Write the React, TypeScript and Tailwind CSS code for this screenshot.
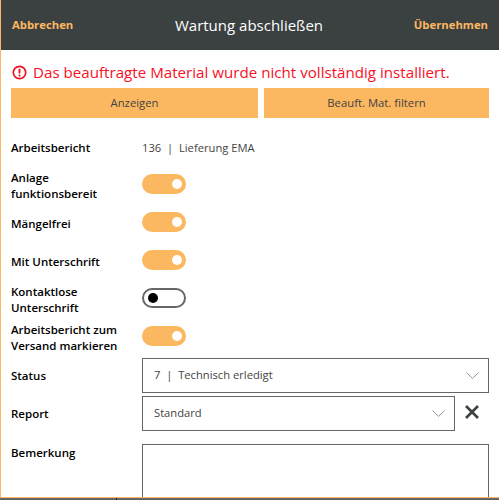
function Toggle({ on = true }: { on?: boolean }) {
  if (!on) {
    return (
      <div className="flex h-[20px] w-[44px] items-center rounded-full border-2 border-[#666666] bg-white pl-[4px]">
        <div className="h-[10px] w-[10px] rounded-full bg-black" />
      </div>
    )
  }
  return (
    <div className="flex h-[20px] w-[44px] items-center justify-end rounded-full bg-[#fbb860] pr-[4px]">
      <div className="h-[10px] w-[10px] rounded-full bg-white" />
    </div>
  )
}

function ToggleRow({ label, on = true }: { label: string; on?: boolean }) {
  return (
    <div className="flex h-[38px] items-center">
      <div className="mt-[1px] w-[131px] whitespace-pre-line text-[11.5px] leading-[16px] font-semibold text-black">{label}</div>
      <div className="mb-[2px]">
        <Toggle on={on} />
      </div>
    </div>
  )
}

function Select({ value, className }: { value: string; className: string }) {
  return (
    <div className={`flex h-[35px] items-center justify-between border border-[#666666] bg-white pl-[11px] pr-[9px] ${className}`}>
      <span className="whitespace-pre text-[11.2px] text-[#444444]">{value}</span>
      <svg viewBox="0 0 13 7" className="h-[7px] w-[13px]" fill="none">
        <path d="M0.5 0.5l6 6 6-6" stroke="#999999" strokeWidth="1" />
      </svg>
    </div>
  )
}

export default function App() {
  return (
    <div className="flex h-[501px] w-[499px] flex-col overflow-hidden bg-white font-['Open_Sans',sans-serif]">
      <div className="flex h-[498px] flex-col border-b-[1px] border-l-[1px] border-[#fbb860]">
        <div className="flex h-[50px] shrink-0 items-center bg-[#3b4040] pl-[11px] pr-[11px]">
          <span className="flex-1 text-[11.3px] font-bold text-[#fbb860]">Abbrechen</span>
          <span className="mr-[2px] text-[15px] text-white">Wartung abschließen</span>
          <span className="flex-1 text-right text-[11.3px] font-bold text-[#fbb860]">Übernehmen</span>
        </div>

        <div className="flex h-[38px] shrink-0 items-center gap-[6px] pl-[11px] pt-[6px]">
          <svg viewBox="0 0 16 16" className="h-[15px] w-[15px] shrink-0" fill="none">
            <circle cx="8" cy="8" r="6.6" stroke="#ee1122" strokeWidth="1.8" />
            <path d="M8 4v5" stroke="#ee1122" strokeWidth="2" />
            <circle cx="8" cy="11.3" r="1.1" fill="#ee1122" />
          </svg>
          <span className="text-[15.15px] text-[#f8101f]">Das beauftragte Material wurde nicht vollständig installiert.</span>
        </div>

        <div className="flex h-[30px] shrink-0 gap-[6px] pl-[10px] pr-[10px]">
          <button className="w-[247px] bg-[#fbb860] text-[11.3px] text-[#444444]">Anzeigen</button>
          <button className="flex-1 bg-[#fbb860] text-[11.3px] text-[#444444]">Beauft. Mat. filtern</button>
        </div>

        <div className="flex flex-1 flex-col overflow-hidden pl-[10px] pr-[10px] pt-[10px]">
          <div className="flex h-[38px] shrink-0 items-center pt-[2px]">
            <div className="w-[131px] text-[11.5px] font-semibold text-black">Arbeitsbericht</div>
            <div className="whitespace-pre text-[11.2px] text-[#444444]">136  |  Lieferung EMA</div>
          </div>
          <ToggleRow label={"Anlage\nfunktionsbereit"} />
          <ToggleRow label="Mängelfrei" />
          <ToggleRow label="Mit Unterschrift" />
          <ToggleRow label={"Kontaktlose\nUnterschrift"} on={false} />
          <ToggleRow label={"Arbeitsbericht zum\nVersand markieren"} />

          <div className="mt-[2px] flex items-center">
            <div className="w-[131px] text-[11.5px] font-semibold text-black">Status</div>
            <Select value="7  |  Technisch erledigt" className="flex-1" />
          </div>
          <div className="mt-[3px] flex items-center">
            <div className="w-[131px] text-[11.5px] font-semibold text-black">Report</div>
            <Select value="Standard" className="w-[313px]" />
            <svg viewBox="0 0 14 14" className="mb-[3px] ml-[10px] h-[14px] w-[14px]" fill="none">
              <path d="M1 1l12 12M13 1L1 13" stroke="#3b4040" strokeWidth="2.6" />
            </svg>
          </div>
          <div className="mt-[13px] flex min-h-0 flex-1">
            <div className="w-[131px] text-[11.5px] font-semibold text-black">Bemerkung</div>
            <div className="flex-1 border-x border-t border-[#666666] bg-white" />
          </div>
        </div>
      </div>
      <div className="flex h-[2px] bg-[#666666]">
        <div className="ml-[116px] w-[1px] bg-[#222222]" />
      </div>
    </div>
  )
}
